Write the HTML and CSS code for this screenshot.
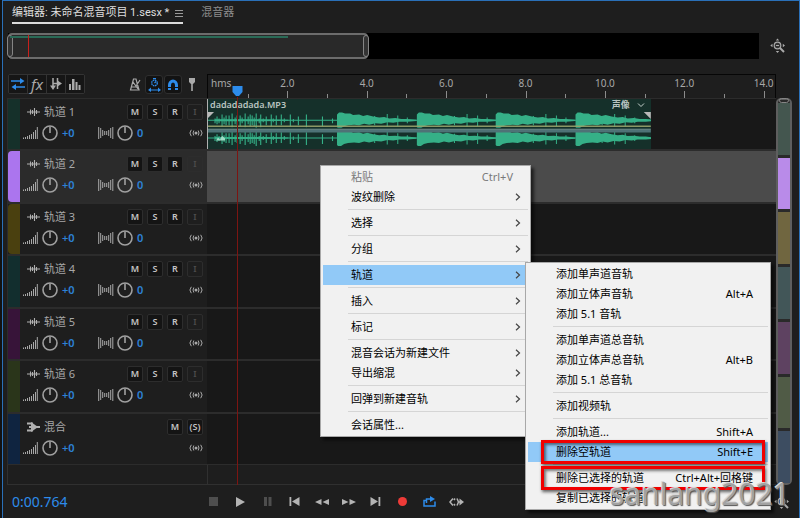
FILE: index.html
```html
<!DOCTYPE html>
<html lang="zh-CN">
<head>
<meta charset="utf-8">
<title>未命名混音项目 1.sesx</title>
<link rel="stylesheet" href="styles.css">
</head>
<body>
<svg class="symbols" aria-hidden="true">
  <symbol id="i-wave" viewBox="0 0 14 12"><path d="M0 6H13M3.500 3.500V8.500M5.500 4V8M7.500 2V10M9.500 4V8" stroke="currentColor" stroke-width="1.100" fill="none"/></symbol>
  <symbol id="i-vol" viewBox="0 0 15 14"><path d="M.5 11.500V13M2.500 11V13M4.500 10V13M6.500 9V13M8.500 8V13M10.500 6V13M12.500 4V13M14.300 1V13" stroke="currentColor" fill="none"/></symbol>
  <symbol id="i-knob" viewBox="0 0 16 16"><circle cx="8" cy="8" r="7" stroke="currentColor" stroke-width="1.600" fill="none"/><path d="M8 1.500V8" stroke="currentColor" stroke-width="1.600"/></symbol>
  <symbol id="i-pan" viewBox="0 0 16 14"><path d="M.7 1V13M2.700 2V12M4.700 4V10M6.700 5V9M8.700 5V9M10.700 4V10M12.700 2V12M14.800 1V13" stroke="currentColor" fill="none"/></symbol>
  <symbol id="i-mon" viewBox="0 0 14 8"><circle cx="7" cy="4" r="1.500" fill="currentColor"/><path d="M4.800 1.500Q3.200 4 4.800 6.500M2.300 .8Q-.5 4 2.300 7.200M9.200 1.500Q10.800 4 9.200 6.500M11.700 .8Q14.500 4 11.700 7.200" stroke="currentColor" fill="none"/></symbol>
  <symbol id="i-chev" viewBox="0 0 6 8"><path d="M1 .8L4.500 4L1 7.200" stroke="currentColor" stroke-width="1.200" fill="none"/></symbol>
  <symbol id="i-zoom" viewBox="0 0 16 16"><circle cx="7.500" cy="7.500" r="3.300" stroke="currentColor" stroke-width="1.200" fill="#333"/><path d="M10 10L14 14" stroke="currentColor" stroke-width="2"/><path d="M6 7.500H9" stroke="currentColor"/><path d="M5.800 2.500L7.500 .5L9.200 2.500ZM5.800 13L7.500 15L9.200 13ZM2.500 5.800L.3 7.500L2.500 9.200ZM12.800 5.800L15 7.500L12.800 9.200Z" fill="currentColor"/></symbol>
</svg>

<div class="app">
  <nav class="tabs">
    <div class="tab active"><a href="#editor">编辑器: 未命名混音项目 1.sesx *</a>
      <button class="plain" aria-label="面板菜单"><svg width="8" height="9" viewBox="0 0 8 9"><path d="M0 1.500H8M0 4.500H8M0 7.500H8" stroke="#9a9a9a"/></svg></button></div>
    <div class="tab"><a href="#mixer">混音器</a></div>
  </nav>

  <div class="overview">
    <div class="overview-bar">
      <div class="view">
        <span class="grip"></span><span class="view-clip"></span><span class="grip"></span>
        <i class="view-head"></i>
      </div>
    </div>
    <button class="plain zoom" aria-label="全部缩小"><svg width="16" height="16"><use href="#i-zoom"/></svg></button>
  </div>

  <div class="workspace" id="editor">
    <div class="timeline">
      <div class="top-row">
        <div class="tools">
          <div class="group">
            <button aria-label="输入输出" class="blue"><svg width="14" height="12" viewBox="0 0 14 12"><path d="M0 3H10M4 9H14" stroke="currentColor" stroke-width="1.600"/><path d="M9 0L13.500 3L9 6ZM5 6L.5 9L5 12Z" fill="currentColor"/></svg></button>
            <button aria-label="效果" class="fx">fx</button>
            <button aria-label="发送"><svg width="12" height="14" viewBox="0 0 12 14"><path d="M3 1V10M3 6.500H8M7.500 1V12" stroke="currentColor" stroke-width="1.500" fill="none"/><path d="M0 8.500H6L3 13ZM7.500 3.500L12 6.500L7.500 9.500Z" fill="currentColor"/></svg></button>
            <button aria-label="均衡器"><svg width="12" height="12" viewBox="0 0 12 12"><path d="M0 6H2V12H0ZM3 1H5.500V12H3ZM6.500 4H8.500V12H6.500ZM9.500 7H11.500V12H9.500Z" fill="currentColor"/></svg></button>
          </div>
          <div class="snaps">
            <button aria-label="节拍器"><svg width="12" height="13" viewBox="0 0 12 13"><path d="M4.500 1H7L10 12H1.500ZM2 9H9.500M4 4L9 11M7 8L11 2" stroke="currentColor" stroke-width="1.200" fill="none"/></svg></button>
            <button aria-label="时间伸缩" class="on"><svg width="13" height="14" viewBox="0 0 13 14"><circle cx="6.500" cy="5" r="2.800" stroke="currentColor" stroke-width="1.300" fill="none" stroke-dasharray="1.600 .6"/><path d="M5 .6H8M6.500 5L8 3.500M1 12H12" stroke="currentColor" stroke-width="1.200"/><path d="M3 9.500V14L0 12ZM10 9.500V14L13 12Z" fill="currentColor"/></svg></button>
            <button aria-label="对齐" class="on"><svg width="12" height="12" viewBox="0 0 12 12"><path d="M2.500 11V6A3.500 4 0 0 1 9.500 6V11" stroke="currentColor" stroke-width="3" fill="none"/><path d="M1 8.500H5M7 8.500H11" stroke="#111"/></svg></button>
            <button aria-label="标记"><svg width="8" height="13" viewBox="0 0 8 13"><path d="M1 0H7V4L5 6H3L1 4ZM3.200 6H4.800V13H3.200Z" fill="currentColor"/></svg></button>
          </div>
        </div>
        <div class="ruler">
          <span class="unit">hms</span>
          <span class="mark">2.0</span><span class="mark">4.0</span><span class="mark">6.0</span><span class="mark">8.0</span><span class="mark">10.0</span><span class="mark">12.0</span><span class="mark">14.0</span>
        </div>
      </div>

      <div class="tracks">
        <section class="track">
          <div class="head"><span class="strip c1"></span>
            <div class="ctl">
              <div class="line"><svg class="ico" width="14" height="12"><use href="#i-wave"/></svg><span class="name">轨道 1</span><span class="btns"><button>M</button><button>S</button><button>R</button><button disabled>I</button></span></div>
              <div class="line low"><svg width="15" height="14"><use href="#i-vol"/></svg><svg class="knob" width="16" height="16"><use href="#i-knob"/></svg><span class="val">+0</span><svg width="16" height="14"><use href="#i-pan"/></svg><svg class="knob two" width="16" height="16"><use href="#i-knob"/></svg><span class="val">0</span><svg class="mon" width="14" height="8"><use href="#i-mon"/></svg></div>
            </div></div>
          <div class="lane">
            <div class="clip">
              <div class="clip-title"><span>dadadadada.MP3</span><span class="pan">声像<svg width="8" height="5" viewBox="0 0 8 5"><path d="M1 .5L4 3.500L7 .5" stroke="#c5d0cc" fill="none"/></svg></span></div>
              <svg class="wave" viewBox="0 0 441 39" preserveAspectRatio="none">
                <defs>
                  <path id="burst" d="M0 -6L2 -8H5L8 -7L13 -7L16 -5.500L22 -6L26 -4.500L30 -5.500L36 -4L42 -3L47 -3.500L52 -2L58 -2.500L64 -1.500L70 -1.500L79 -.6V.6L70 1.500L62 1.500L56 2.500L50 2L44 3.500L38 3L32 4.500L27 3.500L22 5L17 4.500L11 5L7 6L4 8H1L0 7Z"/>
                  <path id="ticks" d="M37.500 -4.500V5M50 -6.500V6.500M60.500 -5V6M70 -3V3"/>
                  <g id="channel">
                    <path d="M0 0H441" stroke="#35b087"/>
                    <path d="M7 -2V3M9 -4V4M11 -2V3M14 -6V6M16 -3V4M18 -5V5M21 -5V5M24 -7V7M27 -3V4M29 -5V5M32 -5V6M34 -3V3M37 -7V7M40 -4V4M42 -6V6M44 -5V5M46 -3V6M48 -7V8M51 -2V3M52.500 -6V7M55 -2V2M58 -4V5M63 -6V6M65 -2V2M68 -5V5M73 -6V5M76 -2V2M82 -6V6M85 -1.500V2M90 -4V5M98 -6V7M114 -4V6M124 -2V3" stroke="#35b087" stroke-width="1.100"/>
                    <path d="M7 -1H55L80 -.5V.5L55 1H7Z" fill="#35b087"/>
                    <g fill="#35b087"><use href="#burst" x="128.500"/><use href="#burst" x="208"/><use href="#burst" x="286.500"/><use href="#burst" x="366"/></g>
                    <g stroke="#35b087"><use href="#ticks" x="128.500"/><use href="#ticks" x="208"/><use href="#ticks" x="286.500"/><use href="#ticks" x="355"/></g>
                  </g>
                </defs>
                <use href="#channel" y="9.500"/><use href="#channel" y="27.500"/>
                <path d="M8 30L10 27L12 29L14 25L17 28L17 30Z" fill="#9fdcc6"/>
                <path d="M0 15.500H441" stroke="#98a36c" stroke-width="1.500" opacity=".9"/>
                <path d="M0 17.500H441" stroke="#15302a"/>
                <path d="M0 18.500H441" stroke="#7c9a9c"/>
                <path d="M0 20.500H441" stroke="#4e7276" stroke-width="2.500"/>
                <path d="M0 1H6L0 7ZM441 1H434L441 8Z" fill="#b9b9b9"/>
              </svg>
            </div>
          </div>
        </section>

        <section class="track selected">
          <div class="head"><span class="strip c2"></span>
            <div class="ctl">
              <div class="line"><svg class="ico" width="14" height="12"><use href="#i-wave"/></svg><span class="name">轨道 2</span><span class="btns"><button>M</button><button>S</button><button>R</button><button disabled>I</button></span></div>
              <div class="line low"><svg width="15" height="14"><use href="#i-vol"/></svg><svg class="knob" width="16" height="16"><use href="#i-knob"/></svg><span class="val">+0</span><svg width="16" height="14"><use href="#i-pan"/></svg><svg class="knob two" width="16" height="16"><use href="#i-knob"/></svg><span class="val">0</span><svg class="mon" width="14" height="8"><use href="#i-mon"/></svg></div>
            </div></div>
          <div class="lane"></div>
        </section>

        <section class="track">
          <div class="head"><span class="strip c3"></span>
            <div class="ctl">
              <div class="line"><svg class="ico" width="14" height="12"><use href="#i-wave"/></svg><span class="name">轨道 3</span><span class="btns"><button>M</button><button>S</button><button>R</button><button disabled>I</button></span></div>
              <div class="line low"><svg width="15" height="14"><use href="#i-vol"/></svg><svg class="knob" width="16" height="16"><use href="#i-knob"/></svg><span class="val">+0</span><svg width="16" height="14"><use href="#i-pan"/></svg><svg class="knob two" width="16" height="16"><use href="#i-knob"/></svg><span class="val">0</span><svg class="mon" width="14" height="8"><use href="#i-mon"/></svg></div>
            </div></div>
          <div class="lane"></div>
        </section>

        <section class="track">
          <div class="head"><span class="strip c4"></span>
            <div class="ctl">
              <div class="line"><svg class="ico" width="14" height="12"><use href="#i-wave"/></svg><span class="name">轨道 4</span><span class="btns"><button>M</button><button>S</button><button>R</button><button disabled>I</button></span></div>
              <div class="line low"><svg width="15" height="14"><use href="#i-vol"/></svg><svg class="knob" width="16" height="16"><use href="#i-knob"/></svg><span class="val">+0</span><svg width="16" height="14"><use href="#i-pan"/></svg><svg class="knob two" width="16" height="16"><use href="#i-knob"/></svg><span class="val">0</span><svg class="mon" width="14" height="8"><use href="#i-mon"/></svg></div>
            </div></div>
          <div class="lane"></div>
        </section>

        <section class="track">
          <div class="head"><span class="strip c5"></span>
            <div class="ctl">
              <div class="line"><svg class="ico" width="14" height="12"><use href="#i-wave"/></svg><span class="name">轨道 5</span><span class="btns"><button>M</button><button>S</button><button>R</button><button disabled>I</button></span></div>
              <div class="line low"><svg width="15" height="14"><use href="#i-vol"/></svg><svg class="knob" width="16" height="16"><use href="#i-knob"/></svg><span class="val">+0</span><svg width="16" height="14"><use href="#i-pan"/></svg><svg class="knob two" width="16" height="16"><use href="#i-knob"/></svg><span class="val">0</span><svg class="mon" width="14" height="8"><use href="#i-mon"/></svg></div>
            </div></div>
          <div class="lane"></div>
        </section>

        <section class="track">
          <div class="head"><span class="strip c6"></span>
            <div class="ctl">
              <div class="line"><svg class="ico" width="14" height="12"><use href="#i-wave"/></svg><span class="name">轨道 6</span><span class="btns"><button>M</button><button>S</button><button>R</button><button disabled>I</button></span></div>
              <div class="line low"><svg width="15" height="14"><use href="#i-vol"/></svg><svg class="knob" width="16" height="16"><use href="#i-knob"/></svg><span class="val">+0</span><svg width="16" height="14"><use href="#i-pan"/></svg><svg class="knob two" width="16" height="16"><use href="#i-knob"/></svg><span class="val">0</span><svg class="mon" width="14" height="8"><use href="#i-mon"/></svg></div>
            </div></div>
          <div class="lane"></div>
        </section>

        <section class="track mix">
          <div class="head"><span class="strip c7"></span>
            <div class="ctl">
              <div class="line"><svg class="ico" width="14" height="12" viewBox="0 0 14 12"><path d="M0 2.500H6M0 9.500H6M2 6H13" stroke="currentColor" stroke-width="1.800"/><path d="M4 1L11 6L4 11Z" fill="currentColor"/></svg><span class="name">混合</span><span class="btns"><button>M</button><button>(S)</button></span></div>
              <div class="line low"><svg width="15" height="14"><use href="#i-vol"/></svg><svg class="knob" width="16" height="16"><use href="#i-knob"/></svg><span class="val">+0</span><svg class="mon" width="14" height="8"><use href="#i-mon"/></svg></div>
            </div></div>
          <div class="lane"></div>
        </section>
      </div>

      <div class="rest"><div></div><div></div></div>

      <div class="head-layer"><i class="needle"></i><svg class="flag" width="11" height="11" viewBox="0 0 11 11"><path d="M.5 0H10.500V6L7 10H4L.5 6Z" fill="#2d8ceb"/></svg></div>
    </div>

    <div class="minimap"><span class="cap"></span>
      <div class="m1"></div><div class="m2"></div><div class="m3"></div><div class="m4"></div><div class="m5"></div><div class="m6"></div><div class="m7"></div>
    </div>
  </div>

  <footer class="transport">
    <output class="time">0:00.764</output>
    <div class="keys">
      <button aria-label="停止" class="dim"><svg width="9" height="9"><path d="M0 0H9V9H0Z" fill="currentColor"/></svg></button>
      <button aria-label="播放"><svg width="9" height="10"><path d="M0 0L9 5L0 10Z" fill="currentColor"/></svg></button>
      <button aria-label="暂停" class="dim"><svg width="8" height="9"><path d="M0 0H3V9H0ZM4.500 0H7.500V9H4.500Z" fill="currentColor"/></svg></button>
      <button aria-label="上一个"><svg width="11" height="9"><path d="M.5 0H2.300V9H.5ZM10.500 0V9L3 4.500Z" fill="currentColor"/></svg></button>
      <button aria-label="快退"><svg width="14" height="8"><path d="M6.500 1V7L0 4ZM14 1V7L7.500 4Z" fill="currentColor"/></svg></button>
      <button aria-label="快进"><svg width="14" height="8"><path d="M0 1V7L6.500 4ZM7.500 1V7L14 4Z" fill="currentColor"/></svg></button>
      <button aria-label="下一个"><svg width="11" height="9"><path d="M8.500 0H10.300V9H8.500ZM.5 0V9L8 4.500Z" fill="currentColor"/></svg></button>
      <button aria-label="录制" class="rec"><svg width="9" height="9"><circle cx="4.500" cy="4.500" r="4.500" fill="currentColor"/></svg></button>
      <button aria-label="循环" class="blue"><svg width="13" height="11" viewBox="0 0 13 11"><path d="M3.500 4.500H1V10H12V5.500M3.500 7V3H8" stroke="currentColor" stroke-width="1.500" fill="none"/><path d="M7 0L12 3L7 6Z" fill="currentColor"/></svg></button>
      <button aria-label="跳过"><svg width="15" height="10" viewBox="0 0 15 10"><path d="M4 1.500L1 5L4 8.500M6 1.500L5 3M6 8.500L5 7M8 1.500L9.500 5L8 8.500M9 5H12" stroke="currentColor" stroke-width="1.500" fill="none"/><path d="M10.500 1.500L15 5L10.500 8.500Z" fill="currentColor"/></svg></button>
    </div>
    <button class="plain zoom-out" aria-label="缩小"><svg width="16" height="16"><use href="#i-zoom"/></svg></button>
  </footer>
</div>

<ul class="menu context" role="menu">
  <li><button disabled><span>粘贴</span><kbd>Ctrl+V</kbd></button></li>
  <li><button><span>波纹删除</span><svg width="6" height="8"><use href="#i-chev"/></svg></button></li>
  <li class="sep"></li>
  <li><button><span>选择</span><svg width="6" height="8"><use href="#i-chev"/></svg></button></li>
  <li class="sep"></li>
  <li><button><span>分组</span><svg width="6" height="8"><use href="#i-chev"/></svg></button></li>
  <li class="sep"></li>
  <li><button class="hot"><span>轨道</span><svg width="6" height="8"><use href="#i-chev"/></svg></button></li>
  <li class="sep"></li>
  <li><button><span>插入</span><svg width="6" height="8"><use href="#i-chev"/></svg></button></li>
  <li class="sep"></li>
  <li><button><span>标记</span><svg width="6" height="8"><use href="#i-chev"/></svg></button></li>
  <li class="sep"></li>
  <li><button><span>混音会话为新建文件</span><svg width="6" height="8"><use href="#i-chev"/></svg></button></li>
  <li><button><span>导出缩混</span><svg width="6" height="8"><use href="#i-chev"/></svg></button></li>
  <li class="sep"></li>
  <li><button><span>回弹到新建音轨</span><svg width="6" height="8"><use href="#i-chev"/></svg></button></li>
  <li class="sep"></li>
  <li><button><span>会话属性...</span></button></li>
</ul>

<ul class="menu submenu" role="menu">
  <li><button><span>添加单声道音轨</span></button></li>
  <li><button><span>添加立体声音轨</span><kbd>Alt+A</kbd></button></li>
  <li><button><span>添加 5.1 音轨</span></button></li>
  <li class="sep"></li>
  <li><button><span>添加单声道总音轨</span></button></li>
  <li><button><span>添加立体声总音轨</span><kbd>Alt+B</kbd></button></li>
  <li><button><span>添加 5.1 总音轨</span></button></li>
  <li class="sep"></li>
  <li><button><span>添加视频轨</span></button></li>
  <li class="sep"></li>
  <li><button><span>添加轨道...</span><kbd>Shift+A</kbd></button></li>
  <li class="boxed"><button class="hot"><span>删除空轨道</span><kbd>Shift+E</kbd></button></li>
  <li class="sep"></li>
  <li class="boxed"><button><span>删除已选择的轨道</span><kbd>Ctrl+Alt+回格键</kbd></button></li>
  <li><button><span>复制已选择的轨道</span></button></li>
</ul>

<div class="watermark">sanlang2021</div>
</body>
</html>
```
FILE: styles.css
```css
* { box-sizing: border-box; }
body {
  margin: 0;
  background: #121212;
  color: #a8a8a8;
  font: 11px/16px "Noto Sans", "Noto Sans CJK SC", sans-serif;
}
button {
  display: inline-flex;
  align-items: center;
  justify-content: center;
  margin: 0;
  padding: 0;
  border: 0;
  background: none;
  color: inherit;
  font: inherit;
}
a { color: inherit; text-decoration: none; }
svg { display: block; flex: none; }
.symbols { position: absolute; width: 0; height: 0; }

.app {
  display: flex;
  flex-direction: column;
  min-height: 100vh;
  border: solid #2a70b8;
  border-width: 1px 1px 0 1px;
  margin-left: 2px;
  padding-top: 4px;
  background: #1e1e1e;
}

/* panel tabs */
.tabs { display: flex; gap: 18px; height: 28px; padding-left: 9px; font-family: Roboto, "Noto Sans CJK SC", sans-serif; }
.tab { display: flex; gap: 6px; height: 19px; color: #8c8c8c; }
.tab.active { color: #dedede; border-bottom: 2px solid #dcdcdc; }

/* session overview */
.overview { display: flex; align-items: center; height: 26px; padding-left: 5px; padding-right: 13px; }
.overview-bar { flex: 1; height: 26px; margin-right: 11px; background: #000; }
.view {
  position: relative;
  display: flex;
  justify-content: space-between;
  width: 48%;
  height: 26px;
  border: 2px solid #6c6c6c;
  border-radius: 4px;
  background: #292929;
}
.view-clip { flex: 1; height: 2px; margin: 1px 78px 0 0; background: #2a6b57; }
.grip { width: 6px; margin: 0 -3px; border: 1px solid #858585; border-radius: 3px; background: #333; }
.view-head { position: absolute; left: 18px; top: 0; bottom: 0; width: 1px; background: #c8201c; }
.zoom { width: 16px; color: #aaa; }

/* timeline */
.workspace { flex: 1; display: flex; padding: 15px 7px 0 4px; }
.timeline { position: relative; flex: 1; display: flex; flex-direction: column; min-width: 0; }
.top-row { display: flex; height: 24px; }
.tools { flex: none; display: flex; justify-content: space-between; align-items: flex-start; width: 200px; padding: 0 6px 0 1px; color: #aaa; }
.group { display: flex; gap: 1px; border: 1px solid #333; border-radius: 2px; background: #333; }
.group button { width: 18px; height: 18px; background: #161616; }
.group .fx { font: italic 15px/16px "Noto Sans", sans-serif; }
.blue, .tools .blue { color: #2d8ceb; }
.snaps { display: flex; gap: 1px; padding-top: 1px; }
.snaps button { width: 18px; height: 19px; }
.snaps .on { color: #2d8ceb; background: #131313; border: 1px solid #2e2e2e; border-radius: 3px; }
.ruler { flex: 1; display: flex; min-width: 0; overflow: hidden; border: 1px solid #060606; border-width: 1px 1px 0 1px; font-size: 10px; }
.unit { flex: none; width: 7%; padding-left: 2px; border-left: 1px solid #1e1e1e; }
.mark { position: relative; flex: none; width: 14%; text-align: center; }
.mark::before, .mark::after { content: ""; position: absolute; bottom: 0; width: 1px; background: #8c8c8c; }
.mark::before { left: 0; height: 4px; }
.mark::after { left: 50%; height: 7px; }

.tracks { flex: 1; display: grid; grid-template-rows: repeat(7, 1fr); }
.track { display: flex; min-height: 0; border: 1px solid #2c2c2c; border-width: 1px 0; }
.head { flex: none; display: flex; width: 200px; border-left: 1px solid #2c2c2c; background: #1e1e1e; }
.selected .head { background: #2b2b2b; }
.strip { width: 12px; }
.c1 { background: #15302a; }
.c2 { background: #ab75ee; border-radius: 4px 0 0 4px; }
.c3 { background: #4a400f; border-radius: 4px 0 0 4px; }
.c4 { background: #122e2e; }
.c5 { background: #371439; }
.c6 { background: #2a351a; }
.c7 { background: #0f2440; }
.ctl { flex: 1; display: flex; flex-direction: column; gap: 2px; padding: 4px 4px 0 3px; }
.line { display: flex; align-items: center; height: 18px; }
.ico { margin: 0 3px 0 4px; color: #b0b0b0; }
.btns { display: flex; gap: 4px; margin-left: auto; }
.btns button { width: 16px; height: 16px; border: 1px solid #2d2d2d; border-radius: 2px; background: #141414; color: #c4c4c4; font-size: 9px; font-weight: 600; }
.btns button:disabled { background: none; color: #4c4c4c; }
.low { height: 20px; }
.knob { margin-left: 4px; color: #a0a0a0; }
.val { width: 40px; padding-left: 4px; color: #2d82d6; font-weight: 600; }
.two { margin-left: 3px; }
.mon { margin-left: auto; }
.lane { flex: 1; min-width: 0; background: #181818; }
.selected .lane { background: #4b4b4b; }

.clip { display: flex; flex-direction: column; width: 78%; height: 100%; border-left: 1px solid #b0b0b0; background: #15302a; }
.clip-title { display: flex; justify-content: space-between; padding: 0 6px 0 2px; color: #b9c4c0; font-size: 9px; line-height: 12px; font-weight: 600; }
.pan { display: flex; align-items: center; gap: 7px; }
.wave { flex: 1 1 0; width: 100%; height: 0; min-height: 0; }

.rest { display: flex; height: 20px; border-bottom: 1px solid #303030; }
.rest div:first-child { width: 201px; border: solid #303030; border-width: 0 1px; }

.head-layer { position: absolute; left: 200px; right: 0; top: 12px; bottom: 0; pointer-events: none; }
.needle { position: absolute; left: 5%; top: 11px; bottom: 0; width: 1px; margin-left: 2px; background: #7c1512; }
.flag { position: absolute; left: 5%; top: 0; margin-left: -3px; }

.minimap { position: relative; display: flex; flex-direction: column; gap: 3px; width: 16px; margin-top: 24px; padding-top: 3px; border: 2px solid #5e5e5e; border-radius: 5px; background: #2a2a2a; }
.minimap div { flex: 1; }
.cap { position: absolute; left: 1px; right: 1px; top: -2px; height: 5px; border: 1px solid #858585; border-radius: 3px; }
.m1 { background: #44564f; }
.m2 { background: #b98be9; }
.m3 { background: #706640; }
.m4 { background: #425658; }
.m5 { background: #5e4261; }
.m6 { background: #505b46; }
.m7 { background: #3d4d61; }

/* transport */
.transport { display: flex; align-items: center; height: 33px; padding: 0 9px; }
.time { width: 188px; color: #2d8ceb; font-size: 14px; line-height: 20px; }
.keys { display: flex; flex: 1; color: #b4b4b4; }
.keys button { width: 27px; height: 20px; }
.keys .dim { color: #4e4e4e; }
.keys .rec { color: #ee3b38; }
.keys .blue { color: #2d8ceb; }
.zoom-out { color: #aaa; }

/* menus */
.menu { position: absolute; margin: 0; padding: 1px 2px; list-style: none; border: 1px solid #a8a8a8; background: #f1f1f1; color: #000; box-shadow: 3px 3px 3px rgba(0, 0, 0, .6); }
.context { left: 320px; top: 165px; width: 211px; }
.submenu { left: 525px; top: 262px; width: 246px; }
.menu button { display: flex; justify-content: space-between; width: 100%; height: 20px; padding: 0 7px 0 28px; line-height: 20px; white-space: nowrap; }
.menu button:disabled { color: #7a7a7a; }
.menu kbd { margin-right: 8px; font: inherit; }
.menu svg { color: #444; }
.menu .hot { background: #91c9f7; }
.sep { height: 6px; padding: 2px 0 3px 25px; }
.sep::before { content: ""; display: block; height: 1px; background: #d5d5d5; }
.boxed { position: relative; }
.boxed::after { content: ""; position: absolute; inset: -2px 3px -2px 13px; border: 3px solid #f00000; box-shadow: 1px 2px 3px rgba(0, 0, 0, .6), inset 2px 2px 3px rgba(0, 0, 0, .5); }

.watermark { position: absolute; right: 10px; bottom: 4px; color: #a2a2a2; font-size: 30px; line-height: 40px; text-shadow: -1px -1px 0 #d8d8d8, 1px 1px 1px #555; }
```
